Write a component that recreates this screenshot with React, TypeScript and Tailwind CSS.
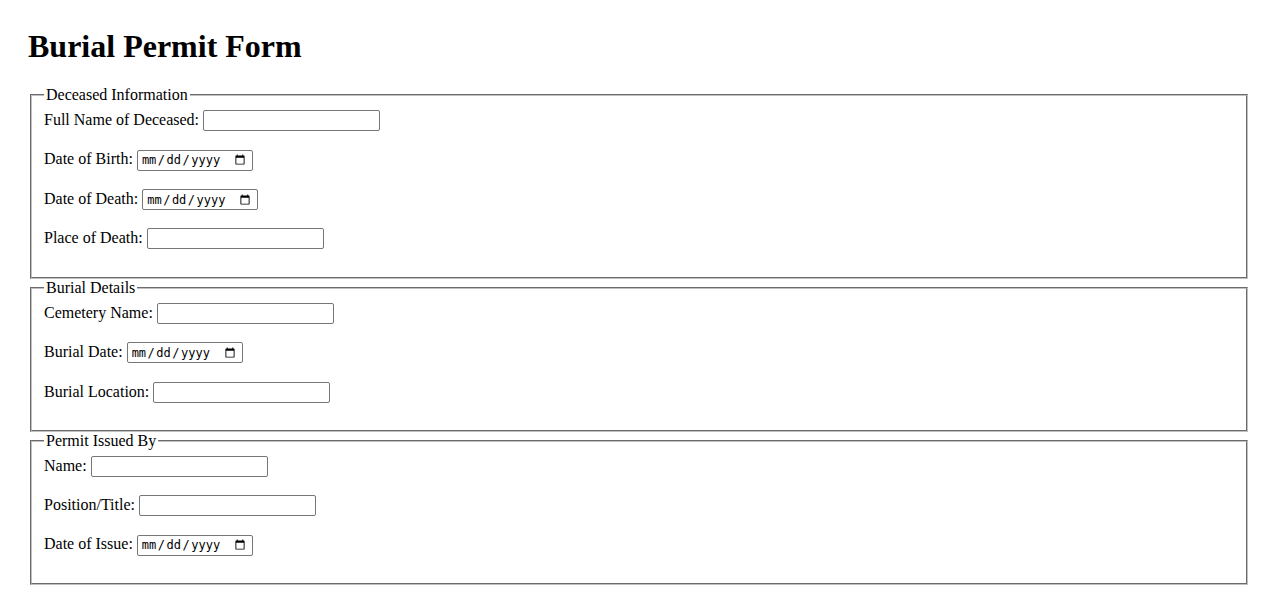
import React from "react";

type Field = { label: string; type: "text" | "date" };

const sections: { title: string; fields: Field[] }[] = [
  {
    title: "Deceased Information",
    fields: [
      { label: "Full Name of Deceased:", type: "text" },
      { label: "Date of Birth:", type: "date" },
      { label: "Date of Death:", type: "date" },
      { label: "Place of Death:", type: "text" },
    ],
  },
  {
    title: "Burial Details",
    fields: [
      { label: "Cemetery Name:", type: "text" },
      { label: "Burial Date:", type: "date" },
      { label: "Burial Location:", type: "text" },
    ],
  },
  {
    title: "Permit Issued By",
    fields: [
      { label: "Name:", type: "text" },
      { label: "Position/Title:", type: "text" },
      { label: "Date of Issue:", type: "date" },
    ],
  },
];

function FormRow({ field }: { field: Field }) {
  return (
    <div className="flex items-baseline gap-[4px] h-[21px]">
      <label className="leading-[18.4px]">{field.label}</label>
      {field.type === "text" ? (
        <input
          type="text"
          className="w-[177px] h-[21px] border border-[#767676] rounded-[2px] px-[2px] bg-white text-[13.33px] font-['Liberation_Sans',sans-serif]"
        />
      ) : (
        <input
          type="date"
          className="w-[116px] h-[21px] border border-[#767676] rounded-[2px] pl-[3px] pr-[4px] bg-white text-[12px] font-['DejaVu_Sans_Mono',monospace] [&::-webkit-datetime-edit-text]:px-[0.5px]"
        />
      )}
    </div>
  );
}

export default function App() {
  return (
    <div className="min-h-screen bg-white text-black px-[28px] pt-[28px] font-['Liberation_Serif',serif] text-[16px]">
      <h1 className="text-[32px] font-bold leading-[36.8px] mb-[21.44px]">Burial Permit Form</h1>

      {sections.map((s) => (
        <fieldset
          key={s.title}
          className="mx-[2px] px-[12px] pt-[5.6px] pb-[9px] border-2 [border-style:groove] border-[#c0c0c0]"
        >
          <legend className="px-[2px] leading-[18.4px]">{s.title}</legend>
          <div className="flex flex-col gap-[18.4px] pb-[18.4px]">
            {s.fields.map((f) => (
              <FormRow key={f.label} field={f} />
            ))}
          </div>
        </fieldset>
      ))}
    </div>
  );
}
